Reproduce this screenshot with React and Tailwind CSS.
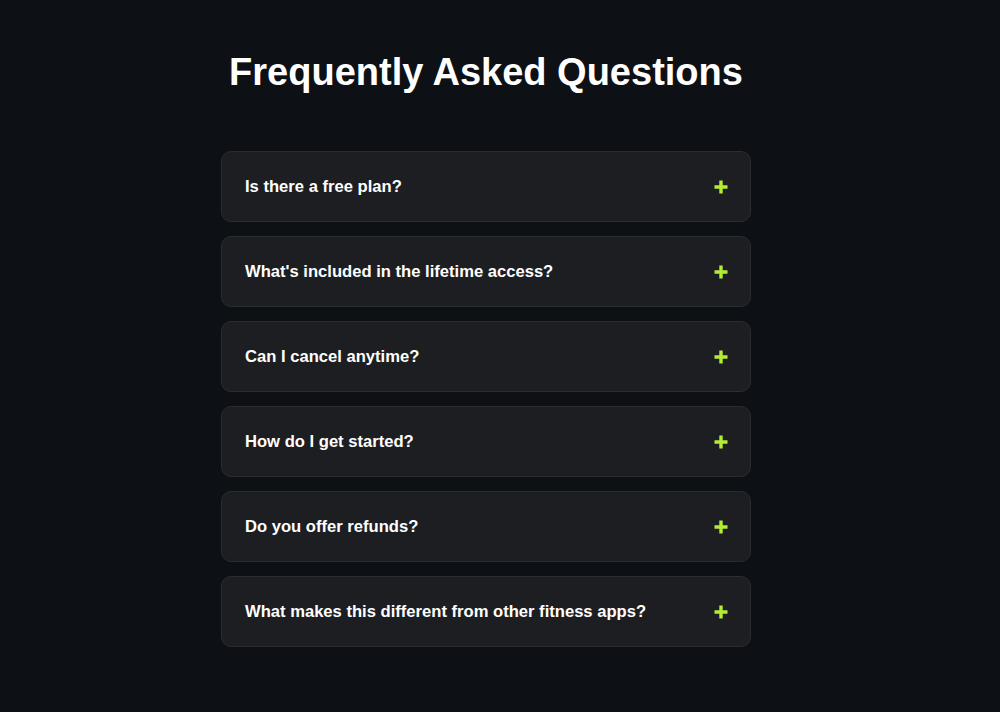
import React, { useState } from "react";

const faqs = [
  "Is there a free plan?",
  "What's included in the lifetime access?",
  "Can I cancel anytime?",
  "How do I get started?",
  "Do you offer refunds?",
  "What makes this different from other fitness apps?",
];

const PlusIcon = () => (
  <svg width="14" height="14" viewBox="0 0 14 14" className="shrink-0">
    <path d="M7 0.5v13M0.5 7h13" stroke="#b2ec34" strokeWidth="3.4" />
  </svg>
);

const FaqItem = ({ question }) => {
  const [open, setOpen] = useState(false);
  return (
    <div className="rounded-[10px] border border-[#2a2c30] bg-[#1d1e21]">
      <button
        onClick={() => setOpen(!open)}
        className="flex h-[69px] w-full items-center justify-between pl-[23px] pr-[22px] pt-[1px] text-left"
      >
        <span className="text-[16.6px] font-bold text-white">{question}</span>
        <PlusIcon />
      </button>
    </div>
  );
};

const App = () => {
  return (
    <div
      className="min-h-[712px] bg-[#0d1014] pr-[28px]"
      style={{ fontFamily: '"Liberation Sans", Arial, sans-serif' }}
    >
      <div className="mx-auto w-[530px] pt-[44px]">
        <h1 className="text-center text-[38px] font-bold text-white">
          Frequently Asked Questions
        </h1>
        {/* FAQ list */}
        <div className="mt-[50px] flex flex-col gap-[14px]">
          {faqs.map((q) => (
            <FaqItem key={q} question={q} />
          ))}
        </div>
      </div>
    </div>
  );
};

export default App;
